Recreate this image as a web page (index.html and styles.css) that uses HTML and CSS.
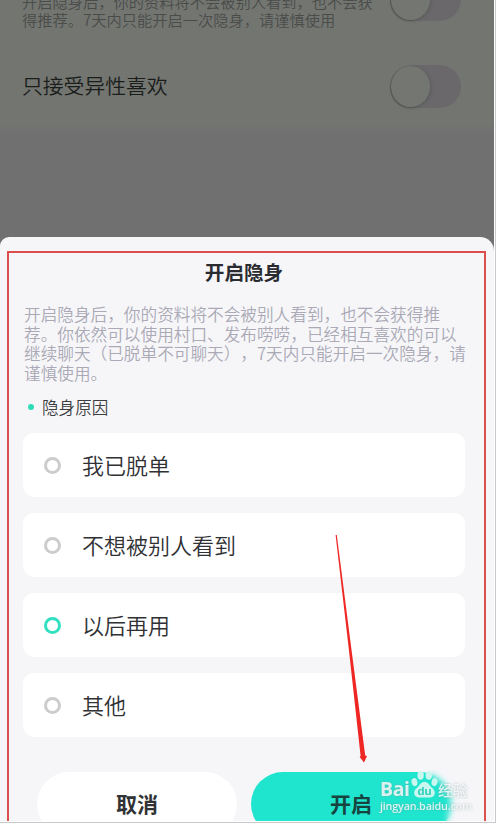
FILE: index.html
```
<!DOCTYPE html>
<html lang="zh-CN">
<head>
  <meta charset="utf-8">
  <title>开启隐身</title>
  <link rel="stylesheet" href="styles.css">
</head>
<body>
  <div class="frame">
    <div class="screen">
      <div class="settings">
        <div class="row row-hint">
          <div class="hint">开启隐身后，你的资料将不会被别人看到，也不会获<br>得推荐。7天内只能开启一次隐身，请谨慎使用</div>
          <div class="switch"></div>
        </div>
        <div class="row">
          <div class="label">只接受异性喜欢</div>
          <div class="switch"></div>
        </div>
      </div>

      <div class="sheet">
        <h2>开启隐身</h2>
        <p class="desc">开启隐身后，你的资料将不会被别人看到，也不会获得推<br>荐。你依然可以使用村口、发布唠唠，已经相互喜欢的可以<br>继续聊天（已脱单不可聊天），7天内只能开启一次隐身，请<br>谨慎使用。</p>
        <div class="reason"><span class="dot"></span>隐身原因</div>
        <div class="options">
          <div class="option"><span class="radio"></span>我已脱单</div>
          <div class="option"><span class="radio"></span>不想被别人看到</div>
          <div class="option"><span class="radio active"></span>以后再用</div>
          <div class="option"><span class="radio"></span>其他</div>
        </div>
        <div class="buttons">
          <div class="btn">取消</div>
          <div class="btn primary">开启</div>
        </div>
      </div>

      <div class="mark-box"></div>
      <svg class="arrow" width="40" height="232" viewBox="0 0 40 232">
        <path d="M5.6 4 L6.8 4 L21.4 118 L35.2 224.5 L37 225 L34 231.5 L29.6 226 L30.6 225 L18.8 118 Z" fill="#ee2724"/>
      </svg>

      <div class="watermark">
        <div class="brand">
          <span class="bai">Bai</span>
          <svg class="paw" width="27" height="30" viewBox="0 0 28 30">
            <ellipse cx="10" cy="5" rx="3.3" ry="4.6"/>
            <ellipse cx="18.4" cy="5" rx="3.3" ry="4.6"/>
            <ellipse cx="3.6" cy="12" rx="3" ry="4.2" transform="rotate(-15 3.6 12)"/>
            <ellipse cx="24.4" cy="12" rx="3" ry="4.2" transform="rotate(15 24.4 12)"/>
            <path d="M14 11.5 C17 11.5 18.5 14 20.5 16.5 C23 19 25.5 21 24.5 24.500 C23.500 28 20 28 14 28 C8 28 4.500 28 3.500 24.500 C2.500 21 5 19 7.500 16.500 C9.500 14 11 11.500 14 11.500 Z"/>
            <text x="14" y="25.5" text-anchor="middle">du</text>
          </svg>
          <span class="exp">经验</span>
        </div>
        <div class="site">jingyan.baidu.com</div>
      </div>
    </div>
  </div>
</body>
</html>
```
FILE: styles.css
```
*{box-sizing:border-box}
body{margin:0;background:#fff;font-family:"Noto Sans CJK SC",sans-serif;font-weight:350;text-spacing-trim:space-all}
.frame{width:496px;height:823px;padding:0 1px 1px 0;border-right:1px solid #c9c9c9;border-bottom:1px solid #c9c9c9}
.screen{position:relative;width:494px;height:821px;overflow:hidden;background:#707070}

.settings{display:flow-root;height:237px;background:linear-gradient(#737571 0,#737571 125px,#707070 133px,#707070 100%)}
.row{display:flex;justify-content:space-between;height:64px;padding:0 33px 0 22px;align-items:center}
.row-hint{height:44px;margin-top:-16px;margin-bottom:26px;align-items:flex-end}
.row-hint .switch{margin-bottom:7px}
.hint{font-size:15.25px;line-height:17.5px;color:#4a4c4a;white-space:nowrap}
.label{padding-bottom:2px;font-size:20.8px;color:#1b1d1b}
.switch{width:71px;height:43px;flex:none;border-radius:22px;background:#6a686b}
.switch::before{content:"";display:block;width:39px;height:41px;margin:1px;border-radius:50%;background:#747672;box-shadow:-1px 1px 1px #555755,2px 1px 3px #605f61}

.sheet{height:600px;padding:0 29px 0 23px;background:#f6f6f9;border-radius:9px 14px 0 0}
h2{margin:0;padding-top:21px;font-size:19.6px;line-height:28px;font-weight:700;text-align:center;color:#292b30}
.desc{margin:19px 0 0 1px;font-size:16.65px;line-height:19.6px;color:#aaa9b5;white-space:nowrap}
.reason{display:flex;align-items:center;height:24px;margin-top:12px;font-size:16.6px;color:#3c3d40}
.dot{width:6px;height:6px;margin:0 8px 0 5px;border-radius:50%;background:#2fdcb9}
.options{display:grid;gap:16px;margin-top:14px}
.option{display:flex;align-items:center;height:64px;padding:0 0 2px 21px;border-radius:11px;background:#fff;font-size:22px;color:#303134}
.radio{width:17px;height:17px;margin:3px 21px 0 0;border:3px solid #ccc;border-radius:50%}
.radio.active{border-color:#31dfc1}
.buttons{display:flex;gap:14px;margin:35px 0 0 14px}
.btn{width:200px;height:64px;border-radius:32px;background:#fff;font-size:21px;line-height:62px;font-weight:700;text-align:center;color:#303235}
.primary{background:#1fe5cf;color:#17443f}

.mark-box{position:absolute;left:7px;top:251px;width:479px;height:580px;border:2px solid #dc4d4e}
.arrow{position:absolute;left:330px;top:531px}

.watermark{position:absolute;z-index:1;left:380px;top:770px;width:92px;color:rgba(255,255,255,.8);font-family:"Open Sans",sans-serif;text-shadow:0 0 2px rgba(120,140,140,.6)}
.watermark::before{content:"";position:absolute;left:50px;top:0;width:40px;height:51px;z-index:-1;backdrop-filter:blur(3px)}
.brand{display:flex;align-items:flex-end;height:30px}
.bai{width:31px;font-size:19.5px;line-height:22px;font-weight:700;letter-spacing:-.4px}
.paw{flex:none;fill:#c9f7f0}
.paw text{font:bold 12px "Liberation Sans",sans-serif;fill:#2bcdbb;text-shadow:none}
.exp{font:500 15px/20px "Noto Sans CJK SC",sans-serif}
.site{font-size:10.8px;line-height:12px;font-weight:600;letter-spacing:-.2px;white-space:nowrap}
```
